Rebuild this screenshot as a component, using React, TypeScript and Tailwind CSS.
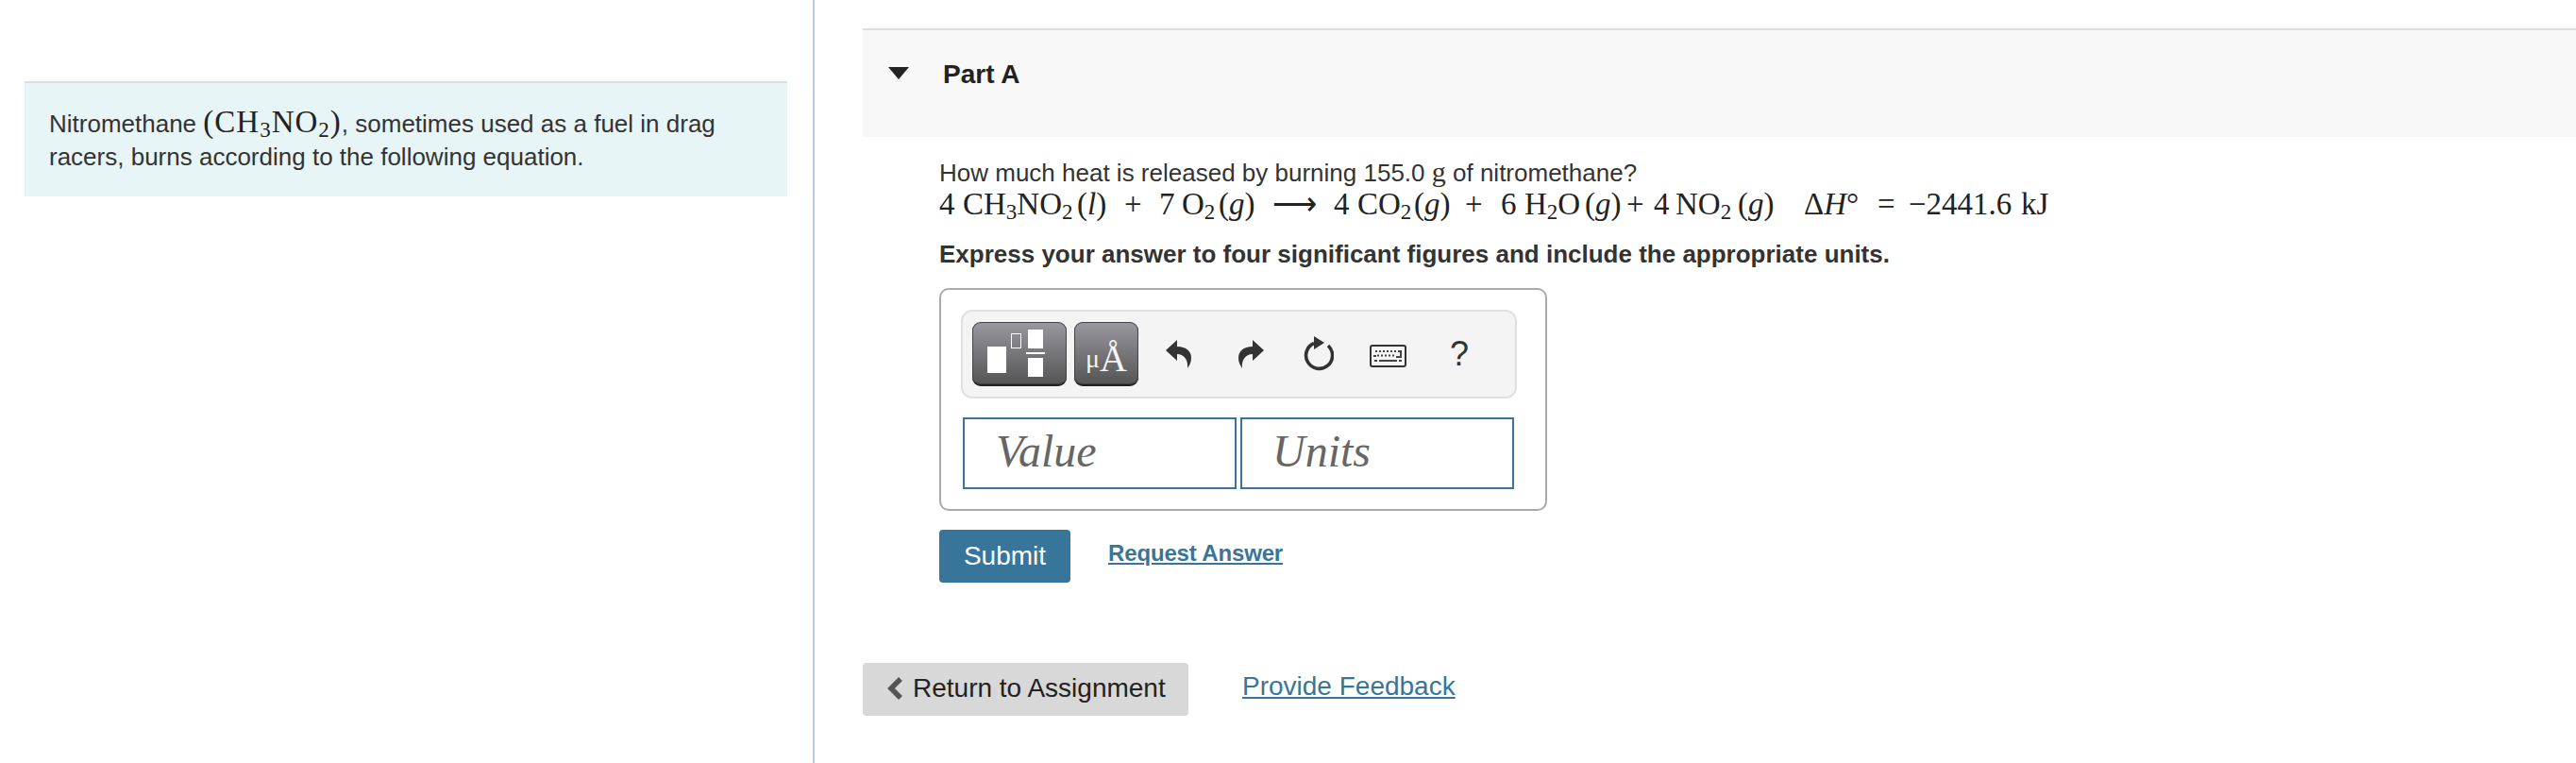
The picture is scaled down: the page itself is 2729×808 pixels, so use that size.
import React from "react";

const serif = "font-['Liberation_Serif',serif]";

function Sub({ children }: { children: React.ReactNode }) {
  return <span className="align-[-5px] text-[23px] leading-[0]">{children}</span>;
}

function Undo({ flip }: { flip?: boolean }) {
  return (
    <svg width="27" height="30" viewBox="0 0 27 30" className={flip ? "-scale-x-100" : ""}>
      <path d="M0 11 L12 0 V7 C22 7 27 12 27 19 C27 24 25 27 23 30 C24 22 20 15 12 15 V22 Z" fill="#333" />
    </svg>
  );
}

function Refresh() {
  return (
    <svg width="34" height="38" viewBox="0 0 34 38">
      <path d="M13 8.5 A14 14 0 1 0 28 11" fill="none" stroke="#333" strokeWidth="3.6" />
      <path d="M13 1 L24 8 L13 15 Z" fill="#333" />
    </svg>
  );
}

function Keyboard() {
  const dots1 = [6, 10, 14, 18, 22, 26, 30];
  const dots2 = [8, 12, 16, 20, 24];
  return (
    <svg width="39" height="24" viewBox="0 0 39 24">
      <rect x="1" y="1" width="37" height="22" rx="2" fill="#f4f4f4" stroke="#333" strokeWidth="2" />
      {dots1.map((x) => (
        <rect key={x} x={x} y="6" width="2" height="2" fill="#444" />
      ))}
      {dots2.map((x) => (
        <rect key={x} x={x} y="10.5" width="2" height="2" fill="#444" />
      ))}
      <rect x="4" y="11" width="3" height="2" fill="#444" />
      <path d="M33 6 V13 H28" fill="none" stroke="#444" strokeWidth="2" />
      <rect x="5" y="16" width="3" height="2" fill="#444" />
      <rect x="10" y="16" width="19" height="2" fill="#444" />
      <rect x="31" y="16" width="3" height="2" fill="#444" />
    </svg>
  );
}

function Equation() {
  return (
    <div className={`${serif} flex h-[36px] items-baseline whitespace-nowrap text-[33px] leading-[36px] text-[#222]`}>
      <span className="w-[25px] shrink-0">4</span>
      <span className="w-[121px] shrink-0">CH<Sub>3</Sub>NO<Sub>2</Sub></span>
      <span className="w-[50px] shrink-0">(<i>l</i>)</span>
      <span className="w-[37px] shrink-0">+</span>
      <span className="w-[24px] shrink-0">7</span>
      <span className="w-[39px] shrink-0">O<Sub>2</Sub></span>
      <span className="w-[57px] shrink-0">(<i>g</i>)</span>
      <span className="w-[65px] shrink-0">⟶</span>
      <span className="w-[25px] shrink-0">4</span>
      <span className="w-[60px] shrink-0">CO<Sub>2</Sub></span>
      <span className="w-[54px] shrink-0">(<i>g</i>)</span>
      <span className="w-[38px] shrink-0">+</span>
      <span className="w-[25px] shrink-0">6</span>
      <span className="w-[64px] shrink-0">H<Sub>2</Sub>O</span>
      <span className="w-[44px] shrink-0">(<i>g</i>)</span>
      <span className="w-[29px] shrink-0">+</span>
      <span className="w-[23px] shrink-0">4</span>
      <span className="w-[66px] shrink-0">NO<Sub>2</Sub></span>
      <span className="w-[70px] shrink-0">(<i>g</i>)</span>
      <span className="w-[78px] shrink-0">Δ<i>H</i>°</span>
      <span className="w-[33px] shrink-0">=</span>
      <span className="w-[119px] shrink-0">−2441.6</span>
      <span>kJ</span>
    </div>
  );
}

export default function App() {
  return (
    <div className="flex h-[808px] w-[2729px] overflow-hidden bg-white font-['Liberation_Sans',sans-serif] text-[#333]">
      <aside className="w-[863px] shrink-0 border-r-2 border-[#b8cbe2] pl-[26px] pr-[27px] pt-[86px]">
        <div className="h-[122px] border-t-2 border-[#dddddd] bg-[#e7f5f7] pl-[26px] pr-[50px] pt-[24px] text-[26px] leading-[35px]">
          Nitromethane{" "}
          <span className={`${serif} text-[33px] leading-[35px] tracking-[1px] text-[#222]`}>
            (CH<Sub>3</Sub>NO<Sub>2</Sub>)
          </span>
          , sometimes used as a fuel in drag racers, burns according to the following equation.
        </div>
      </aside>

      <main className="min-w-0 flex-1 pl-[51px] pt-[30px]">
        <div className="flex h-[115px] items-start border-t-2 border-[#dddddd] bg-[#f8f8f8] pl-[27px] pt-[40px]">
          <svg width="22" height="13" viewBox="0 0 22 13" className="mt-[-1px]">
            <path d="M0 0 H22 L11 13 Z" fill="#222" />
          </svg>
          <span className="ml-[36px] mt-[-13px] text-[28px] font-bold leading-[40px] text-[#222]">Part A</span>
        </div>

        <div className="pl-[81px] pt-[22px]">
          <p className="text-[26px] leading-[29px]">
            How much heat is released by burning 155.0 <span className={`${serif} text-[30px]`}>g</span> of nitromethane?
          </p>
          <Equation />
          <p className="mt-[19px] text-[26px] font-bold leading-[32px]">
            Express your answer to four significant figures and include the appropriate units.
          </p>

          <div className="mt-[20px] h-[236px] w-[644px] rounded-[10px] border-2 border-[#aaaaaa] pl-[21px] pt-[21px]">
            <div className="flex h-[94px] w-[589px] items-center rounded-[12px] border-2 border-[#e0e0e0] bg-[#f4f4f4] pl-[10px]">
              <div className="relative h-[68px] w-[100px] shrink-0 rounded-[9px] border-b-2 border-[#222] bg-gradient-to-b from-[#9b99a1] to-[#555555] shadow-[inset_0_0_0_1px_#444]">
                <span className="absolute left-[16px] top-[26px] h-[28px] w-[20px] bg-white" />
                <span className="absolute left-[41px] top-[12px] h-[16px] w-[11px] border border-white" />
                <span className="absolute left-[59px] top-[8px] h-[20px] w-[16px] bg-white" />
                <span className="absolute left-[57px] top-[32px] h-[2px] w-[20px] bg-white" />
                <span className="absolute left-[59px] top-[38px] h-[20px] w-[16px] bg-white" />
              </div>
              <div className={`ml-[8px] flex h-[68px] w-[68px] shrink-0 items-end justify-center rounded-[9px] border-b-2 border-[#222] bg-gradient-to-b from-[#9b99a1] to-[#555555] pb-[5px] ${serif} text-[40px] leading-[44px] text-[#f4f4f4] shadow-[inset_0_0_0_1px_#444]`}>
                <span className="text-[28px]">μ</span>Å
              </div>
              <span className="ml-[29px] flex"><Undo /></span>
              <span className="ml-[50px] flex"><Undo flip /></span>
              <span className="ml-[40px] mt-[-2px] flex"><Refresh /></span>
              <span className="ml-[38px] mt-[3px] flex"><Keyboard /></span>
              <span className="ml-[46px] text-[36px] leading-none text-[#333]">?</span>
            </div>
            <div className="ml-[2px] mt-[20px] flex gap-[4px]">
              <div className={`h-[76px] w-[290px] border-2 border-[#37769a] pl-[33px] ${serif} text-[48px] italic leading-[68px] text-[#666]`}>Value</div>
              <div className={`h-[76px] w-[290px] border-2 border-[#37769a] pl-[32px] ${serif} text-[48px] italic leading-[68px] text-[#666]`}>Units</div>
            </div>
          </div>

          <div className="mt-[20px] flex items-center">
            <button className="h-[56px] w-[139px] rounded-[4px] bg-[#37769a] text-[28px] text-white">Submit</button>
            <a className="ml-[40px] mt-[-6px] text-[24px] font-bold tracking-[-0.15px] text-[#37769a] underline">Request Answer</a>
          </div>
        </div>

        <div className="mt-[85px] flex items-start">
          <button className="flex h-[56px] w-[345px] items-center rounded-[4px] bg-[#d8d8d8] pb-[3px] pl-[26px] text-[28px] text-[#222]">
            <svg width="17" height="24" viewBox="0 0 17 24">
              <path d="M14 2 L4 12 L14 22" fill="none" stroke="#555" strokeWidth="5.5" />
            </svg>
            <span className="ml-[10px]">Return to Assignment</span>
          </button>
          <a className="ml-[57px] mt-[-3px] text-[28px] leading-[56px] text-[#37769a] underline">Provide Feedback</a>
        </div>
      </main>
    </div>
  );
}
